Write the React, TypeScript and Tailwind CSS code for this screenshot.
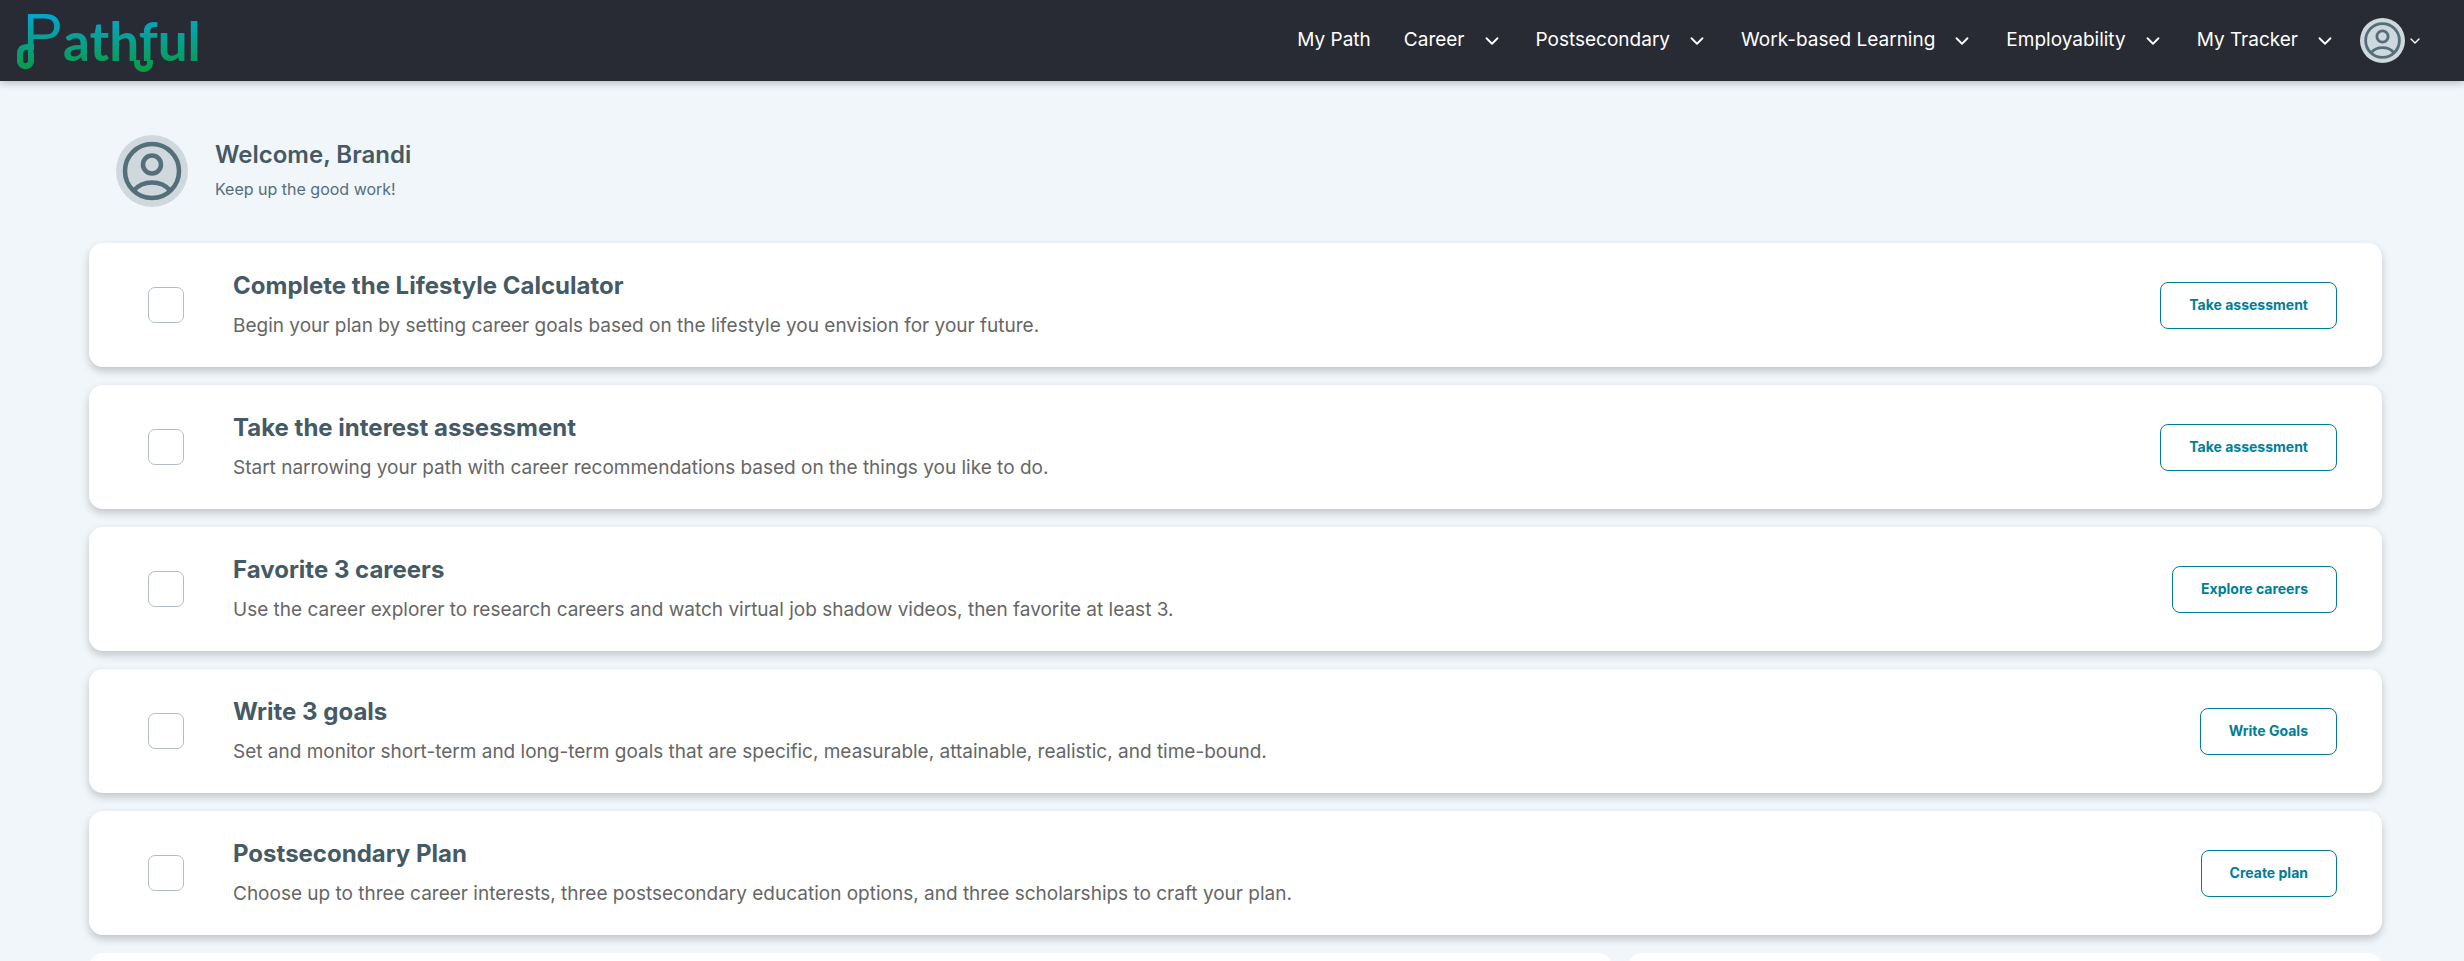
import React from "react";
import { ChevronDown } from "lucide-react";

const navItems = [
    { label: "My Path", menu: false },
    { label: "Career", menu: true },
    { label: "Postsecondary", menu: true },
    { label: "Work-based Learning", menu: true },
    { label: "Employability", menu: true },
    { label: "My Tracker", menu: true },
];

const tasks = [
    {
        id: "lifestyle",
        title: "Complete the Lifestyle Calculator",
        description: "Begin your plan by setting career goals based on the lifestyle you envision for your future.",
        action: "Take assessment",
    },
    {
        id: "interest",
        title: "Take the interest assessment",
        description: "Start narrowing your path with career recommendations based on the things you like to do.",
        action: "Take assessment",
    },
    {
        id: "favorites",
        title: "Favorite 3 careers",
        description: "Use the career explorer to research careers and watch virtual job shadow videos, then favorite at least 3.",
        action: "Explore careers",
    },
    {
        id: "goals",
        title: "Write 3 goals",
        description: "Set and monitor short-term and long-term goals that are specific, measurable, attainable, realistic, and time-bound.",
        action: "Write Goals",
    },
    {
        id: "plan",
        title: "Postsecondary Plan",
        description: "Choose up to three career interests, three postsecondary education options, and three scholarships to craft your plan.",
        action: "Create plan",
    },
];

const Logo: React.FC = () => (
    <svg viewBox="16 0 184 81" className="h-[81px] w-[184px] overflow-visible" role="img" aria-label="Pathful">
        <defs>
            <linearGradient id="brand" gradientUnits="userSpaceOnUse" x1="0" y1="9" x2="0" y2="72">
                <stop offset="0" stopColor="#05a6dc" />
                <stop offset="1" stopColor="#0a9a42" />
            </linearGradient>
        </defs>
        <g fill="url(#brand)">
            <text x="23" y="55" fontSize="60" className="font-['Liberation_Sans',sans-serif]">P</text>
            <text x="63" y="61" fontSize="53" className="font-['Lato',sans-serif] font-bold">athful</text>
        </g>
        {/* Loops hanging below the baseline */}
        <g fill="none" stroke="url(#brand)" strokeWidth="6">
            <path d="M31 53V62a6 7 0 0 1-11 0V54q0-7 7-7H34" />
            <path d="M137 60V63a6.500 6 0 0 0 13 0V60" />
        </g>
    </svg>
);

const Avatar: React.FC<{ className: string }> = ({ className }) => (
    <svg viewBox="0 0 72 72" className={className} aria-hidden="true">
        <circle cx="36" cy="36" r="36" fill="#cfd8dc" />
        <g fill="none" stroke="#546e7a" strokeWidth="4.5">
            <circle cx="36" cy="36" r="27" />
            <circle cx="36" cy="29.5" r="9" />
            <path d="M18 55.500C22 50.500 28 47.500 36 47.500S50 50.500 54 55.500" />
        </g>
    </svg>
);

export default function App() {
    return (
        <div className="h-screen overflow-hidden bg-[#f1f6fb] font-['Inter',sans-serif]">
            <header className="relative flex h-[81px] items-center justify-between bg-[#282b33] pr-[41px] pl-4 shadow-[0_2px_8px_rgba(0,0,0,0.25)]">
                <a href="#home">
                    <Logo />
                </a>
                <div className="flex items-center">
                    <nav className="flex items-center gap-[33px] text-[19px] text-white">
                        {navItems.map((item) =>
                            item.menu ? (
                                <button key={item.label} type="button" className="flex items-center gap-4">
                                    {item.label}
                                    <ChevronDown className="size-[22px]" strokeWidth={2} />
                                </button>
                            ) : (
                                <a key={item.label} href="#my-path">{item.label}</a>
                            )
                        )}
                    </nav>
                    <button type="button" aria-label="Account" className="ml-6 flex items-center gap-0.5 text-white">
                        <Avatar className="size-[45px]" />
                        <ChevronDown className="size-4" strokeWidth={2} />
                    </button>
                </div>
            </header>

            <main className="pr-[82px] pl-[89px]">
                {/* Greeting */}
                <div className="flex items-center gap-[27px] px-[27px] pt-[54px] pb-9">
                    <Avatar className="size-[72px]" />
                    <div className="pt-0.5">
                        <h1 className="text-2xl leading-8 font-semibold text-[#455a64]">Welcome, Brandi</h1>
                        <p className="mt-0.5 text-base leading-8 text-[#546e7a]">Keep up the good work!</p>
                    </div>
                </div>

                {/* Checklist */}
                <div className="flex flex-col gap-[18px]">
                    {tasks.map((task) => (
                        <section
                            key={task.id}
                            className="flex h-[124px] items-center rounded-[14px] bg-white pr-[45px] pl-[59px] shadow-[0_4px_8px_rgba(0,0,0,0.2)]"
                        >
                            <input
                                id={task.id}
                                type="checkbox"
                                className="size-9 shrink-0 appearance-none rounded-[7px] border border-[#b0bec5] bg-white checked:bg-[#007e99]"
                            />
                            <label htmlFor={task.id} className="ml-[49px] flex-1 pt-0.5">
                                <span className="block text-2xl leading-9 font-bold text-[#455a64]">{task.title}</span>
                                <span className="mt-1 block text-[19px] leading-9 text-[#666666]">{task.description}</span>
                            </label>
                            <button
                                type="button"
                                className="h-[47px] rounded-lg border border-[#007e99] px-7 pb-0.5 text-[14px] font-bold text-[#007e99]"
                            >
                                {task.action}
                            </button>
                        </section>
                    ))}
                </div>

                <div className="mt-[18px] grid grid-cols-3 gap-4">
                    <section className="col-span-2 h-[124px] rounded-[14px] bg-white" />
                    <section className="h-[124px] rounded-[14px] bg-white" />
                </div>
            </main>
        </div>
    );
}
